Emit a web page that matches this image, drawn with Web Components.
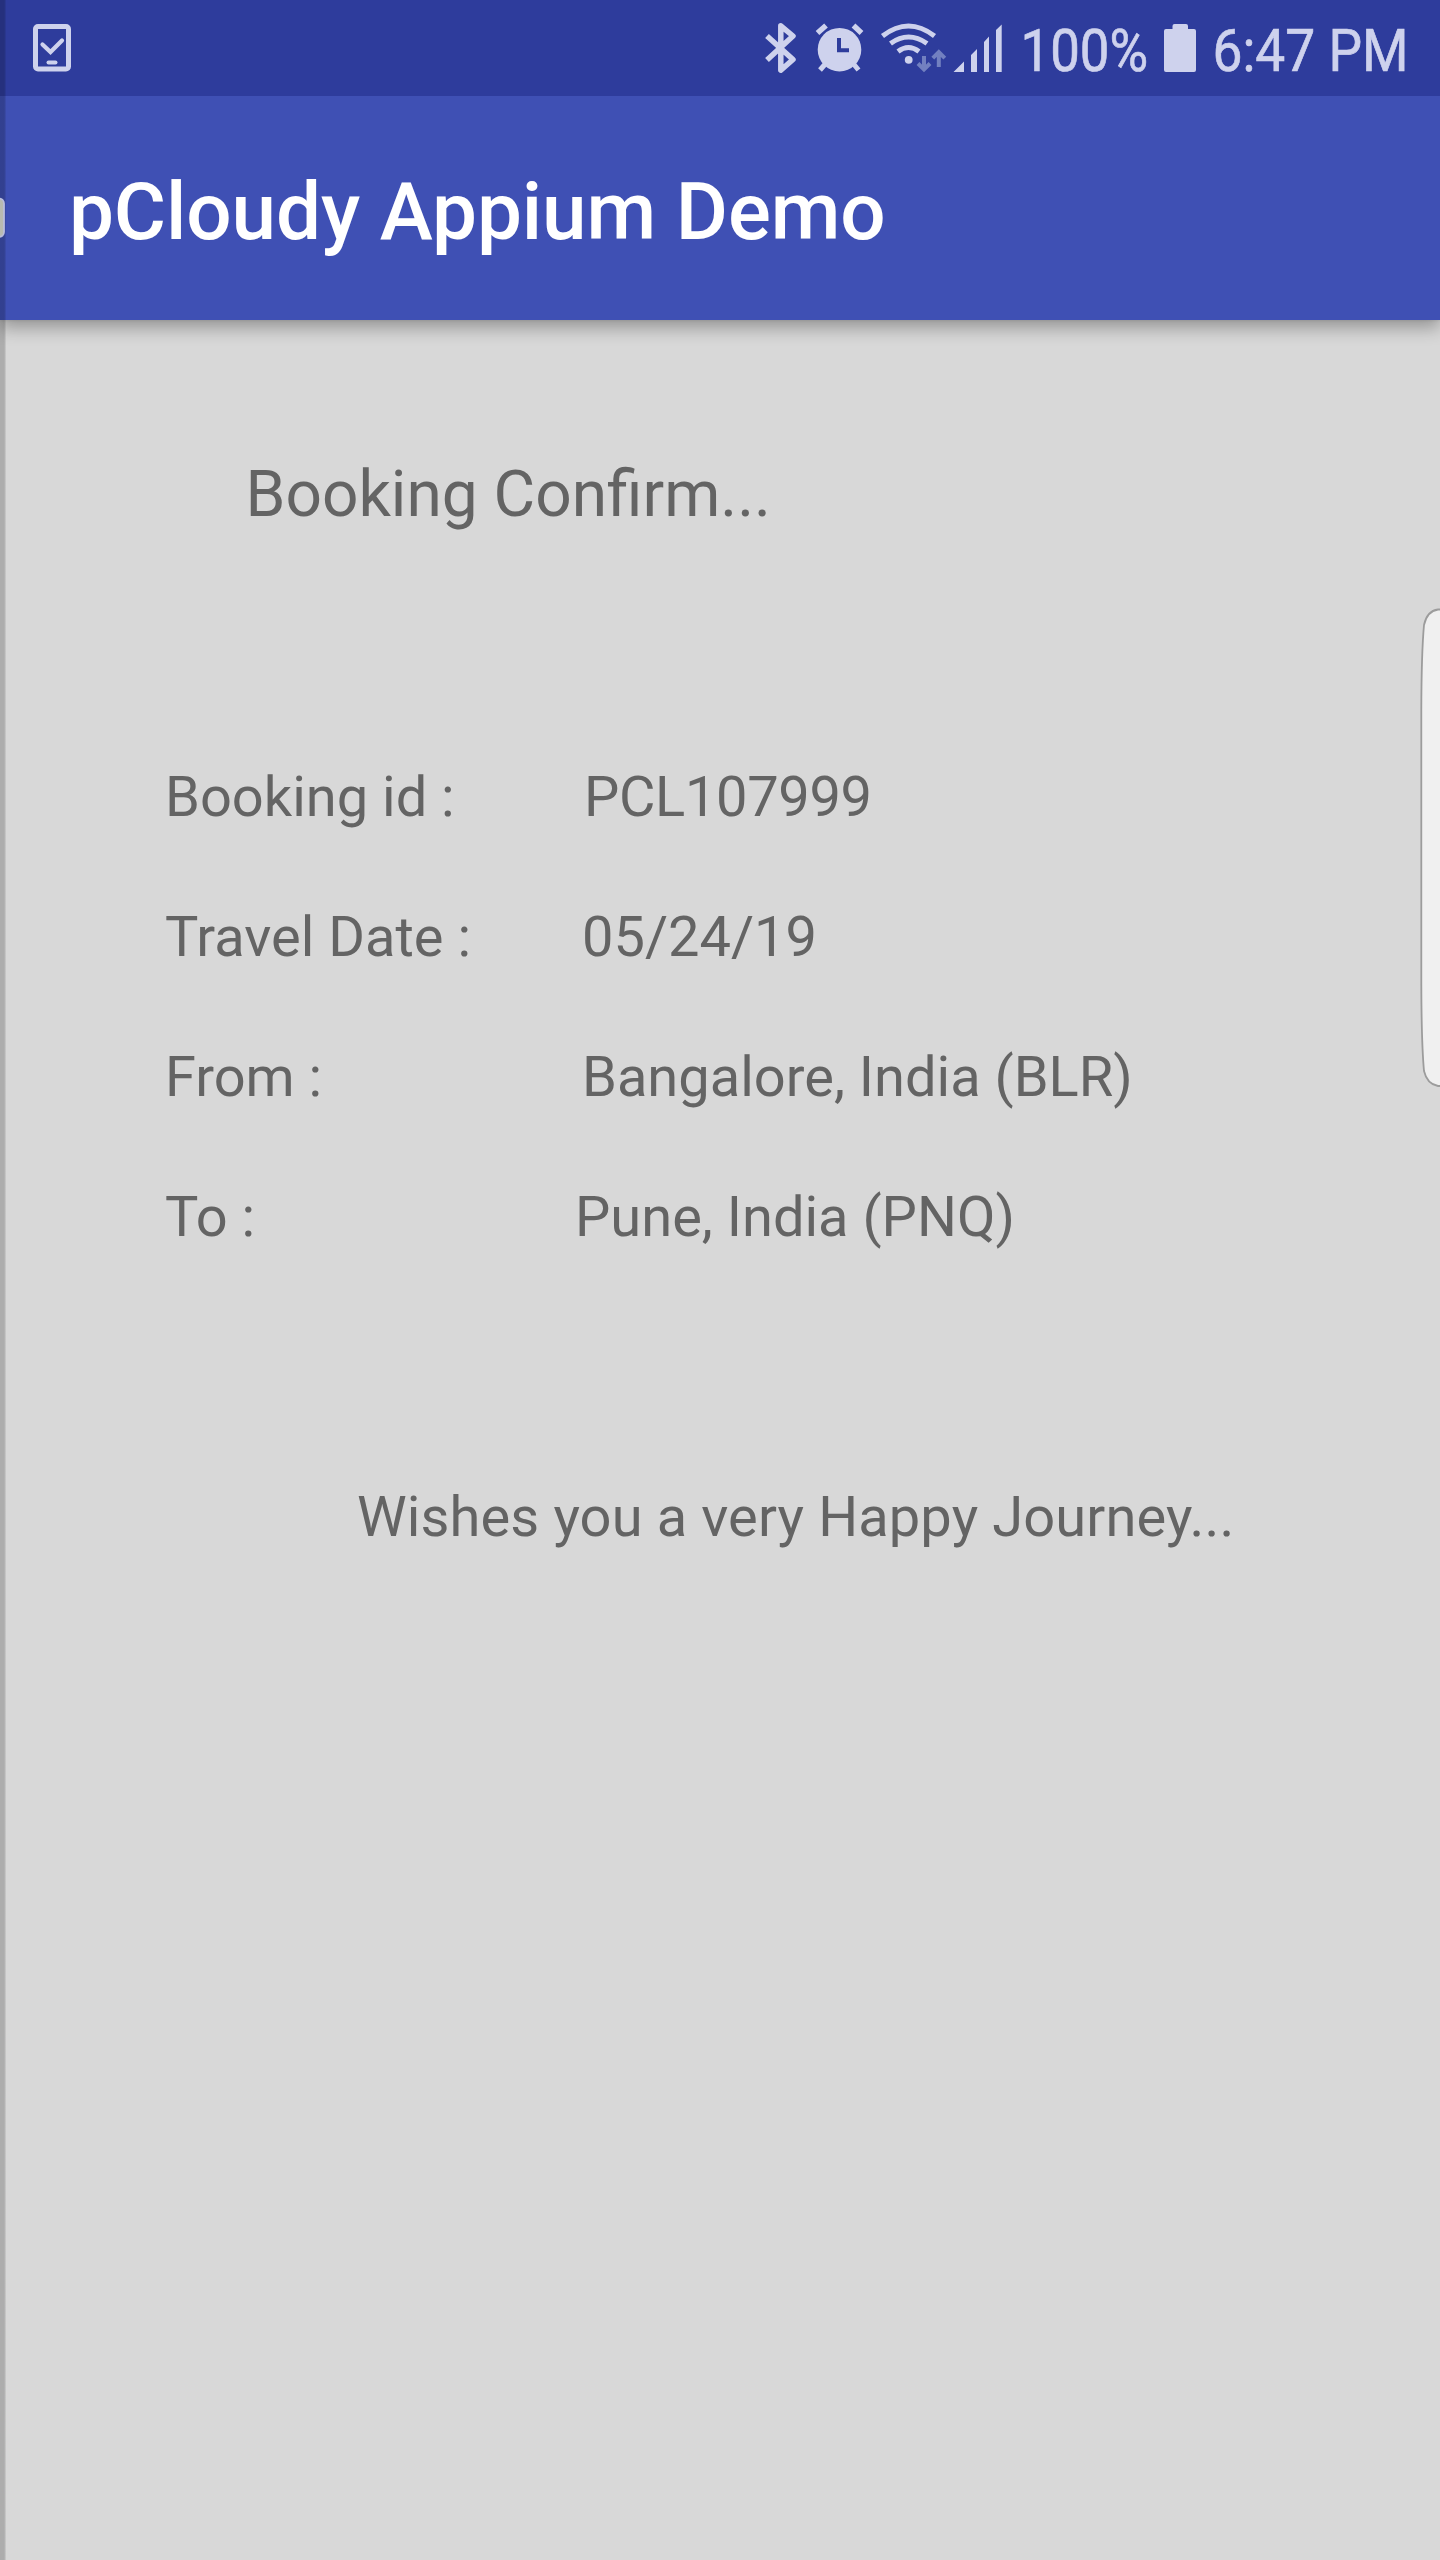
<!DOCTYPE html>
<html lang="en"><head><meta charset="utf-8"><title>pCloudy Appium Demo</title>
<style>html,body{margin:0;background:#d8d8d8}</style></head><body>
<booking-screen></booking-screen>
<script>
const define=(name,html)=>customElements.define(name,class extends HTMLElement{
  constructor(){super();this.attachShadow({mode:'open'}).innerHTML=html;}
});
define('status-bar',`<style>
:host{display:flex;justify-content:space-between;height:96px;background:#2e3c9c;position:relative;z-index:1}
svg{display:block;flex:none}text{font:60px Roboto,sans-serif;fill:#ced2ed;stroke:#ced2ed;stroke-width:.7px}
</style>
<svg width="120" height="96" viewBox="0 0 120 96" fill="none" stroke="#ced2ed" stroke-linecap="round" stroke-linejoin="round">
<rect x="35.5" y="26.5" width="33" height="42.5" rx="2.5" stroke-width="5"/><path d="M42.5 44.5 50.5 52 62 40.5" stroke-width="4.2" stroke-linejoin="miter"/><path d="M48.5 62.4H55.5" stroke-width="4"/></svg>
<svg width="700" height="96" viewBox="740 0 700 96" fill="#ced2ed">
<path d="M767 36 793 59.5 780.8 70.2V25.8L793 36 767 60" fill="none" stroke="#ced2ed" stroke-width="5.5" stroke-linejoin="round"/>
<g stroke="#ced2ed"><circle cx="839.5" cy="49.7" r="21.8" stroke="none"/><path d="M817.5 33 826 25.5M853.5 25.5 861.5 33" stroke-width="5.5"/><path d="M820 70 827 62M852 62 858.5 70" stroke-width="5"/></g>
<path d="M839 38V50.2H849" fill="none" stroke="#2e3c9c" stroke-width="4"/>
<g fill="none" stroke="#ced2ed" stroke-width="5"><path d="M882.5 36Q908.5 16 934.5 36"/><path d="M890.5 43.5Q908.5 30.5 927 43.5"/><path d="M898 51.5Q908.5 43.5 919 51.5"/></g><circle cx="908.7" cy="59.8" r="3.9"/>
<g fill="none" stroke="#7280c0" stroke-width="4"><path d="M924 56V69M918 63.5 924 69.5 930 63.5M938.8 67V53M932.8 58.2 938.8 52.2 944.8 58.2"/></g>
<path d="M953.5 72 964 61.5V72ZM971 72V55L977 49V72ZM984 72V42L989 36.5V72ZM996 72V30L1001.7 24.5V72Z"/>
<text x="1020.500" y="71" textLength="127.500" lengthAdjust="spacingAndGlyphs">100%</text>
<path d="M1172.5 26q0-2 2-2h11.5q2 0 2 2v3h6q2 0 2 2v39q0 2-2 2h-28q-2 0-2-2V31q0-2 2-2h6.500Z"/>
<text x="1212.500" y="71" textLength="196" lengthAdjust="spacingAndGlyphs">6:47 PM</text>
</svg>`);
define('app-bar',`<style>:host{display:block;box-sizing:border-box;height:224px;padding:8px 0 0 69px;background:#3f50b4;color:#fff;font:500 80px/217px Roboto,sans-serif;letter-spacing:-.1px;box-shadow:0 0 3px rgba(0,0,0,.12),0 8px 16px rgba(0,0,0,.3);position:relative;white-space:nowrap}</style><slot></slot>`);
define('booking-row',`<style>:host{display:flex;height:140px;line-height:140px;white-space:nowrap}.label{width:var(--label-width,417px);flex:none}.value{letter-spacing:var(--value-spacing,0)}</style><span class="label"><slot name="label"></slot></span><span class="value"><slot></slot></span>`);
define('edge-handle',`<style>:host{display:block;position:absolute;right:0;top:600px;width:22px;height:500px}svg{display:block}</style>
<svg width="22" height="500" viewBox="1418 600 22 500"><path d="M1442 609.500H1438Q1427 611 1424 625Q1421.500 652 1421.300 710V984Q1421.500 1044 1424 1071Q1427 1084 1438 1086H1442" fill="#f0f0f0" stroke="#9c9c9c" stroke-width="1.800"/></svg>`);
define('drawer-edge',`<style>:host{display:block;position:absolute;z-index:2;left:0;top:0;width:6px;height:2560px;overflow:hidden;background:linear-gradient(90deg,rgba(0,0,0,.2) 0 4px,rgba(0,0,0,.14) 5px,rgba(0,0,0,.03) 6px)}svg{display:block;margin-top:196px}</style>
<svg width="6" height="44"><rect x="-20" y="2.500" width="24" height="38.500" rx="5" fill="#b8bab0" stroke="#b9bcdc" stroke-width="1.800"/></svg>`);
define('booking-screen',`<style>
:host{display:block;position:relative;width:1440px;height:2560px;overflow:hidden;background:#d8d8d8;color:#646464;font:56px Roboto,sans-serif}
main{display:flex;flex-direction:column;padding-top:125px}
h1{margin:0 0 182px 245.500px;font-size:64px;line-height:100px;font-weight:400}
section{margin-left:165px}
p{margin:160px 0 0 357px;line-height:140px;letter-spacing:.12px}
.to{--label-width:410px}.id{--label-width:419px;--value-spacing:-.35px}
</style>
<status-bar></status-bar><app-bar>pCloudy Appium Demo</app-bar>
<main><h1>Booking Confirm...</h1><section>
<booking-row class="id"><span slot="label">Booking id :</span>PCL107999</booking-row>
<booking-row><span slot="label">Travel Date :</span>05/24/19</booking-row>
<booking-row><span slot="label">From :</span>Bangalore, India (BLR)</booking-row>
<booking-row class="to"><span slot="label">To :</span>Pune, India (PNQ)</booking-row>
</section><p>Wishes you a very Happy Journey...</p></main>
<edge-handle></edge-handle><drawer-edge></drawer-edge>`);
</script></body></html>
